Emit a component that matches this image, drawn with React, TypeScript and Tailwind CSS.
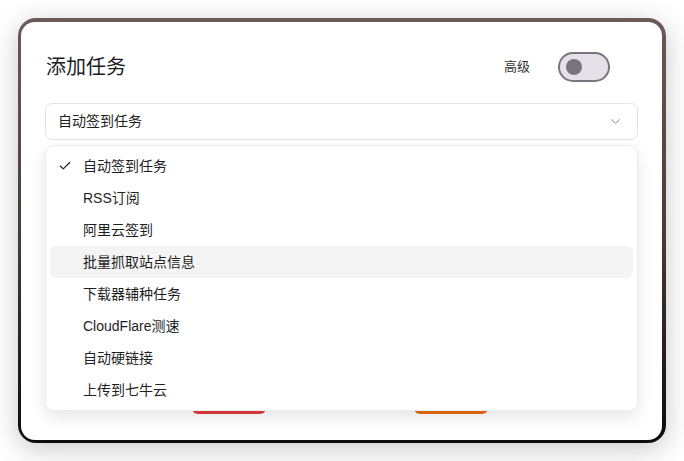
import {Check, ChevronDown} from 'lucide-react';

const options = [
  '自动签到任务',
  'RSS订阅',
  '阿里云签到',
  '批量抓取站点信息',
  '下载器辅种任务',
  'CloudFlare测速',
  '自动硬链接',
  '上传到七牛云',
];

const font = {fontFamily: '"Liberation Sans", "Noto Sans CJK SC", sans-serif'};

const App = () => {
  const selected = '自动签到任务';
  const hovered = '批量抓取站点信息';

  return (
    <div className="w-[684px] h-[461px] bg-white p-[18px]" style={font}>
      {/* window with the page picture behind the dialog */}
      <div className="w-[648px] h-[425px] rounded-[18px] bg-gradient-to-b from-[#6c5a5a] via-[#4a3c3c] to-[#0c0c0c] shadow-[0_6px_28px_rgba(0,0,0,0.22)] pt-[4px] pl-[3px] pr-[4px] pb-[3px]">
        <div className="relative h-full rounded-[14px] bg-white flex flex-col px-6 pt-[28px] pb-[26px]">
          <div className="flex items-center h-[34px]">
            <h2 className="text-[20px] text-[#1c1b1f] flex-1 pl-px">添加任务</h2>
            <span className="text-[13px] text-[#333] mr-[28px]">高级</span>
            <button
              type="button"
              className="w-[52px] h-[30px] rounded-full border-2 border-[#79747e] bg-[#e6e0e9] flex items-center pl-[6px] mr-[28px]"
            >
              <span className="w-4 h-4 rounded-full bg-[#79747e]" />
            </button>
          </div>

          <div className="mt-[19px] h-[37px] rounded-[7px] border border-[#e3e3e3] flex items-center pl-[12px] pr-[14px]">
            <span className="flex-1 text-[14px] text-[#1f1f1f]">{selected}</span>
            <ChevronDown className="w-[15px] h-[15px] text-[#8a8a8a]" strokeWidth={1.6} />
          </div>

          <div className="flex-1" />

          <div className="flex justify-center gap-[148px] pr-[4px]">
            <button type="button" className="w-[74px] h-8 rounded-[6px] bg-[#e03c3c]" />
            <button type="button" className="w-[74px] h-8 rounded-[6px] bg-[#e9690f]" />
          </div>

          {/* open select menu */}
          <ul className="absolute left-6 right-6 top-[123px] bg-white border border-[#ececec] rounded-[8px] shadow-[0_6px_16px_rgba(0,0,0,0.10)] p-1">
            {options.map((opt) => (
              <li
                key={opt}
                className={`h-8 flex items-center rounded-[6px] text-[14px] text-[#1f1f1f] ${
                  opt === hovered ? 'bg-[#f4f4f4]' : ''
                }`}
              >
                <span className="w-[33px] flex justify-center pr-[7px] pl-[3px]">
                  {opt === selected && <Check className="w-[14px] h-[14px]" strokeWidth={2} />}
                </span>
                <span>{opt}</span>
              </li>
            ))}
          </ul>
        </div>
      </div>
    </div>
  );
};

export default App;
